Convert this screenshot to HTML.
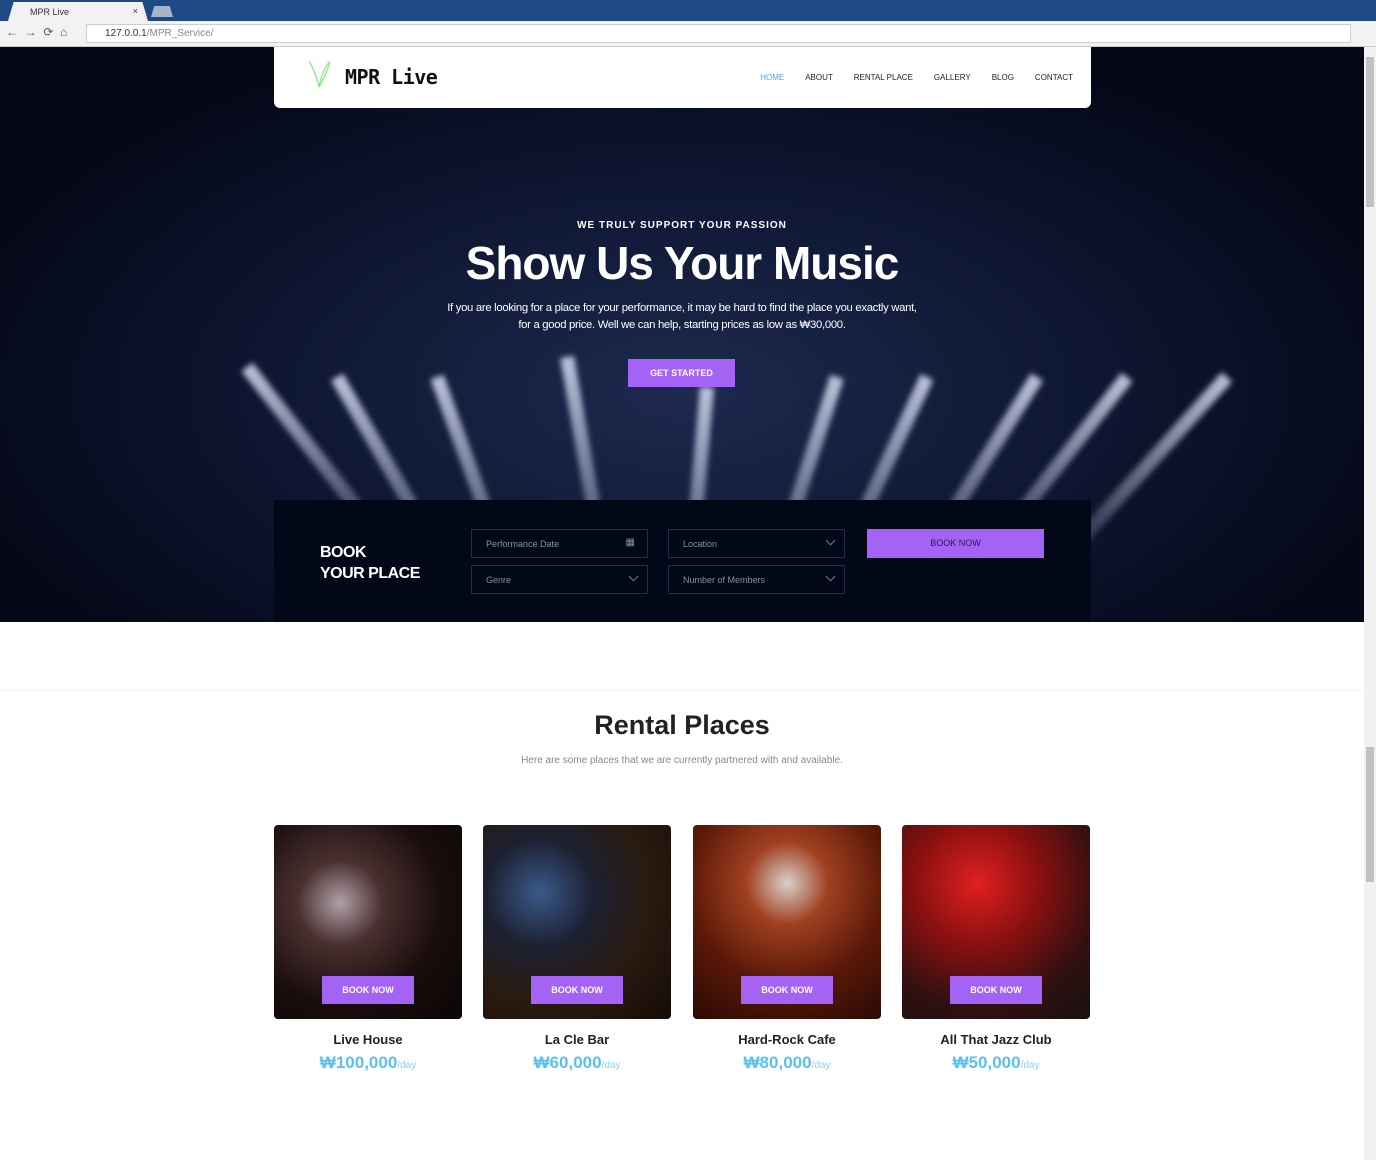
<!DOCTYPE html>
<html><head><meta charset="utf-8"><style>
*{box-sizing:border-box;margin:0;padding:0}
body{width:1376px;height:1160px;overflow:hidden;background:#fff;font-family:"Liberation Sans",sans-serif;position:relative}
.tabbar{position:absolute;left:0;top:0;width:1376px;height:21px;background:#1e4a86}
.tab{position:absolute;left:8px;top:2px;width:140px;height:19px;background:#f2f2f2;clip-path:polygon(4% 0,96% 0,100% 100%,0 100%);font-size:9px;color:#333;padding:5px 0 0 22px}
.tab2{position:absolute;left:151px;top:6px;width:22px;height:11px;background:#a6b5c9;clip-path:polygon(15% 0,85% 0,100% 100%,0 100%)}
.addr{position:absolute;left:0;top:21px;width:1376px;height:26px;background:#f2f2f2;border-bottom:1px solid #ccc}
.url{position:absolute;left:86px;top:3px;width:1265px;height:19px;background:#fff;border:1px solid #ccc;font-size:10px;color:#333;padding:3px 0 0 18px}
.hero{position:absolute;left:0;top:47px;width:1364px;height:575px;background:radial-gradient(ellipse at 50% 60%,#1d2a4e 0%,#0d1530 45%,#040716 80%);overflow:hidden}
.beam{position:absolute;width:14px;height:260px;background:linear-gradient(to bottom,rgba(225,232,255,.8),rgba(150,170,230,.05));filter:blur(3px);transform-origin:top center}
.sb{position:absolute;left:1364px;top:47px;width:12px;height:1113px;background:#f1f1f1}
.nav{position:absolute;left:274px;top:47px;width:817px;height:61px;background:#fff;border-radius:0 0 6px 6px}
.nav ul{position:absolute;right:18px;top:26px;list-style:none;display:flex;gap:21px;font-size:8px;color:#222}
.w{position:absolute;color:#fff;text-align:center;left:0;width:1364px}
.book{position:absolute;left:274px;top:500px;width:817px;height:122px;background:#020818}
.f{position:absolute;width:177px;height:29px;border:1px solid #262d44;color:#8a8fa0;font-size:9px;padding:9px 0 0 14px}
.f i{position:absolute;right:10px;top:7px;width:7px;height:7px;border-right:1px solid #777;border-bottom:1px solid #777;transform:rotate(45deg)}
.card{position:absolute;top:825px;width:188px;height:194px;border-radius:4px;overflow:hidden}
.btn{position:absolute;left:48px;bottom:15px;width:92px;height:28px;background:#a563f6;color:#fff;font-size:9px;font-weight:bold;text-align:center;line-height:28px}
.t{position:absolute;top:1032px;width:188px;text-align:center;font-size:13px;font-weight:bold;color:#222}
.p{position:absolute;top:1053px;width:188px;text-align:center;font-size:17px;font-weight:bold;color:#5bc0f0}
.p span{font-size:10px;font-weight:normal;color:#8bd0f0}
</style></head><body>
<div class="tabbar"><div class="tab">MPR Live<span style="position:absolute;right:10px;top:4px">×</span></div><div class="tab2"></div></div>
<div class="addr"><span style="position:absolute;left:6px;top:4px;font-size:12px;color:#555">←&nbsp;&nbsp;→&nbsp;&nbsp;⟳&nbsp;&nbsp;⌂</span><div class="url">127.0.0.1<span style="color:#888">/MPR_Service/</span></div></div>
<div class="hero">
<div class="beam" style="left:240px;top:320px;transform:rotate(-38deg)"></div>
<div class="beam" style="left:330px;top:330px;transform:rotate(-30deg)"></div>
<div class="beam" style="left:430px;top:330px;transform:rotate(-20deg)"></div>
<div class="beam" style="left:560px;top:310px;transform:rotate(-10deg)"></div>
<div class="beam" style="left:700px;top:340px;transform:rotate(5deg)"></div>
<div class="beam" style="left:830px;top:330px;transform:rotate(18deg)"></div>
<div class="beam" style="left:920px;top:330px;transform:rotate(25deg)"></div>
<div class="beam" style="left:1030px;top:330px;transform:rotate(32deg)"></div>
<div class="beam" style="left:1120px;top:330px;transform:rotate(38deg)"></div>
<div class="beam" style="left:1220px;top:330px;transform:rotate(42deg)"></div>
</div>
<div class="nav">
<svg style="position:absolute;left:33px;top:10px" width="28" height="34" viewBox="0 0 28 34"><path d="M2 4 Q8 14 12 30 Q14 18 20 8 Q24 2 22 8 Q18 20 12 30" fill="none" stroke="#8ee88e" stroke-width="1.3"/></svg>
<div style="position:absolute;left:71px;top:18px;font-size:20px;font-weight:bold;font-family:'DejaVu Sans Mono',monospace;color:#111;letter-spacing:-0.5px">MPR Live</div>
<ul><li style="color:#4aa9f0">HOME</li><li>ABOUT</li><li>RENTAL PLACE</li><li>GALLERY</li><li>BLOG</li><li>CONTACT</li></ul>
</div>
<div class="w" style="top:220px;font-size:10px;font-weight:bold;letter-spacing:1px">WE TRULY SUPPORT YOUR PASSION</div>
<div class="w" style="top:236px;font-size:46px;font-weight:bold;letter-spacing:-1px">Show Us Your Music</div>
<div class="w" style="top:300px;font-size:11.3px;line-height:17px;letter-spacing:-0.3px">If you are looking for a place for your performance, it may be hard to find the place you exactly want,<br>for a good price. Well we can help, starting prices as low as ₩30,000.</div>
<div style="position:absolute;left:628px;top:359px;width:107px;height:28px;background:#a563f6;color:#fff;font-size:9px;font-weight:bold;text-align:center;line-height:28px">GET STARTED</div>
<div class="book">
<div style="position:absolute;left:46px;top:42px;color:#fff;font-size:16px;font-weight:bold;line-height:21px;letter-spacing:-0.5px">BOOK<br>YOUR PLACE</div>
<div class="f" style="left:197px;top:29px">Performance Date<span style="position:absolute;right:12px;top:7px;font-size:10px">▦</span></div>
<div class="f" style="left:394px;top:29px">Location<i></i></div>
<div class="f" style="left:197px;top:65px">Genre<i></i></div>
<div class="f" style="left:394px;top:65px">Number of Members<i></i></div>
<div style="position:absolute;left:593px;top:29px;width:177px;height:29px;background:#a563f6;color:#2a1a50;font-size:9px;text-align:center;line-height:29px">BOOK NOW</div>
</div>
<div style="position:absolute;left:0;top:690px;width:1364px;height:1px;background:#f4f4f4"></div>
<div class="w" style="top:710px;font-size:27px;font-weight:bold;color:#222">Rental Places</div>
<div class="w" style="top:755px;font-size:10px;color:#888">Here are some places that we are currently partnered with and available.</div>
<div class="card" style="left:274px;background:radial-gradient(circle at 35% 40%,#b0a0a8 0%,#4a3030 25%,#1a0d0d 60%,#0a0505 100%)"><div class="btn">BOOK NOW</div></div>
<div class="card" style="left:483px;background:radial-gradient(circle at 30% 35%,#3a5a8a 0%,#1c2030 30%,#2a1a10 60%,#150c06 100%)"><div class="btn">BOOK NOW</div></div>
<div class="card" style="left:693px;background:radial-gradient(circle at 50% 30%,#d8d0c8 0%,#a04020 25%,#5a1808 60%,#2a0a04 100%)"><div class="btn">BOOK NOW</div></div>
<div class="card" style="left:902px;background:radial-gradient(circle at 40% 30%,#e02020 0%,#8a1010 35%,#301010 70%,#181010 100%)"><div class="btn">BOOK NOW</div></div>
<div class="t" style="left:274px">Live House</div><div class="t" style="left:483px">La Cle Bar</div><div class="t" style="left:693px">Hard-Rock Cafe</div><div class="t" style="left:902px">All That Jazz Club</div>
<div class="p" style="left:274px">₩100,000<span>/day</span></div><div class="p" style="left:483px">₩60,000<span>/day</span></div><div class="p" style="left:693px">₩80,000<span>/day</span></div><div class="p" style="left:902px">₩50,000<span>/day</span></div>
<div class="sb"><div style="position:absolute;left:2px;top:10px;width:8px;height:150px;background:#c1c1c1"></div><div style="position:absolute;left:2px;top:700px;width:8px;height:135px;background:#c1c1c1"></div></div>
</body></html>
